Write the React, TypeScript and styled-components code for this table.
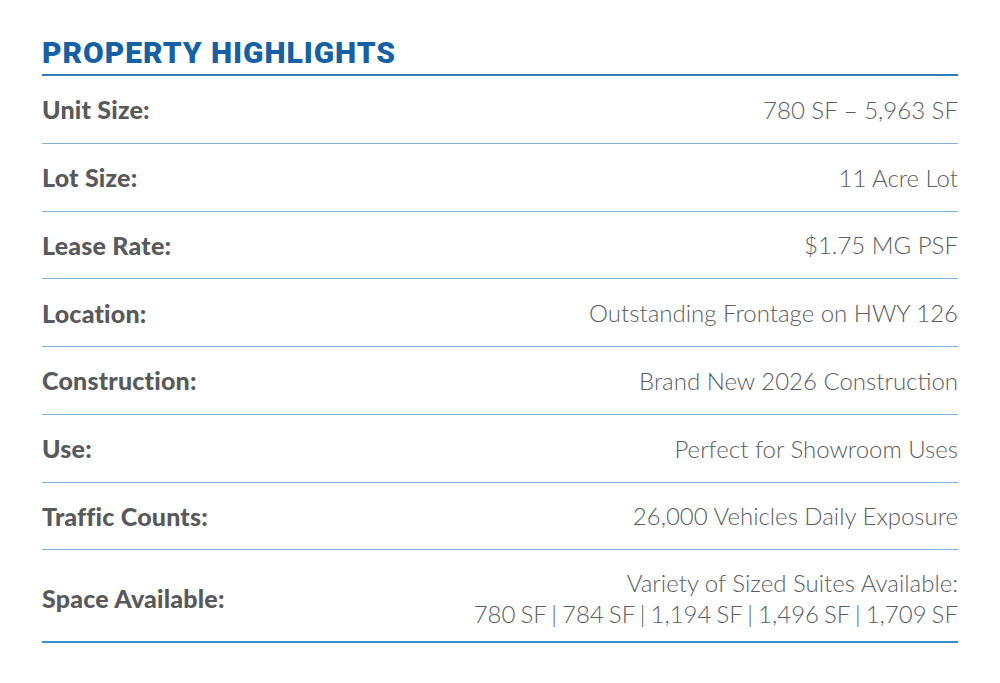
import React from 'react';
import styled, { createGlobalStyle } from 'styled-components';

const GlobalStyle = createGlobalStyle`
  html, body {
    margin: 0;
    padding: 0;
    background: #ffffff;
  }
  body {
    font-family: 'Lato', 'Liberation Sans', sans-serif;
  }
`;

interface Highlight {
  label: string;
  lines: string[];
}

const highlights: Highlight[] = [
  { label: 'Unit Size:', lines: ['780 SF – 5,963 SF'] },
  { label: 'Lot Size:', lines: ['11 Acre Lot'] },
  { label: 'Lease Rate:', lines: ['$1.75 MG PSF'] },
  { label: 'Location:', lines: ['Outstanding Frontage on HWY 126'] },
  { label: 'Construction:', lines: ['Brand New 2026 Construction'] },
  { label: 'Use:', lines: ['Perfect for Showroom Uses'] },
  { label: 'Traffic Counts:', lines: ['26,000 Vehicles Daily Exposure'] },
  {
    label: 'Space Available:',
    lines: ['Variety of Sized Suites Available:', '780 SF | 784 SF | 1,194 SF | 1,496 SF | 1,709 SF'],
  },
];

const App = () => {
  return (
    <>
      <GlobalStyle />
      <Page>
        <Title>PROPERTY HIGHLIGHTS</Title>
        <Table>
          {highlights.map((item, i) => (
            <Row key={item.label} $tall={item.lines.length > 1} $last={i === highlights.length - 1}>
              <Label>{item.label}</Label>
              <Value>
                {item.lines.map((line) => (
                  <ValueLine key={line} $compact={line.includes('|')}>
                    {line}
                  </ValueLine>
                ))}
              </Value>
            </Row>
          ))}
        </Table>
      </Page>
    </>
  );
};

const Page = styled.div`
  width: 916px;
  padding: 33px 42px 0;
`;

const Title = styled.h2`
  margin: 0;
  font-family: 'Roboto', 'Liberation Sans', sans-serif;
  font-weight: 900;
  font-size: 30px;
  letter-spacing: 0.95px;
  line-height: 40px;
  color: #1661a3;
  border-bottom: 2px solid #2e7bbf;
  padding-bottom: 1px;
`;

const Table = styled.div`
  display: flex;
  flex-direction: column;
`;

const Row = styled.div<{ $tall?: boolean; $last?: boolean }>`
  box-sizing: border-box;
  display: flex;
  justify-content: space-between;
  align-items: center;
  height: ${(p) => (p.$tall ? '93px' : '67.75px')};
  padding-top: ${(p) => (p.$tall ? '4px' : '0')};
  border-bottom: ${(p) => (p.$last ? '2px solid #3b8fd0' : '1.5px solid #86b3db')};
`;

const Label = styled.div`
  font-family: 'Lato', 'Liberation Sans', sans-serif;
  font-weight: 900;
  font-size: 25px;
  letter-spacing: 0.2px;
  color: #58595b;
`;

const Value = styled.div`
  font-family: 'Lato', 'Liberation Sans', sans-serif;
  font-weight: 300;
  font-size: 24px;
  line-height: 31px;
  color: #5c5d5f;
  text-align: right;
`;

const ValueLine = styled.div<{ $compact?: boolean }>`
  word-spacing: ${(p) => (p.$compact ? '-1.5px' : '0')};
`;

export default App;
